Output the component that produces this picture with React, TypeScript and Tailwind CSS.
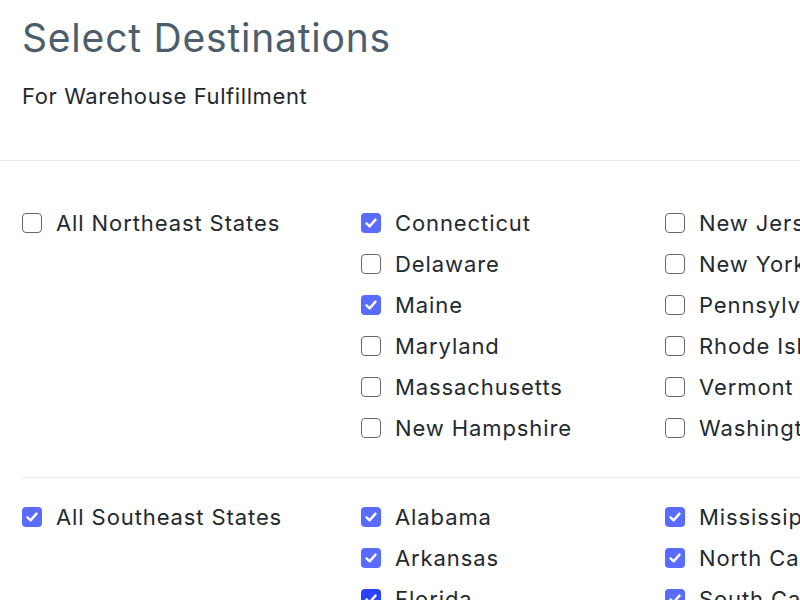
import React from "react";

type Item = { label: string; checked: boolean; focus?: boolean };

type Region = {
  name: string;
  all: boolean;
  columns: Item[][];
};

const regions: Region[] = [
  {
    name: "All Northeast States",
    all: false,
    columns: [
      [
        { label: "Connecticut", checked: true },
        { label: "Delaware", checked: false },
        { label: "Maine", checked: true },
        { label: "Maryland", checked: false },
        { label: "Massachusetts", checked: false },
        { label: "New Hampshire", checked: false },
      ],
      [
        { label: "New Jersey", checked: false },
        { label: "New York", checked: false },
        { label: "Pennsylvania", checked: false },
        { label: "Rhode Island", checked: false },
        { label: "Vermont", checked: false },
        { label: "Washington D.C.", checked: false },
      ],
    ],
  },
  {
    name: "All Southeast States",
    all: true,
    columns: [
      [
        { label: "Alabama", checked: true },
        { label: "Arkansas", checked: true },
        { label: "Florida", checked: true, focus: true },
        { label: "Georgia", checked: true },
        { label: "Kentucky", checked: true },
        { label: "Louisiana", checked: true },
      ],
      [
        { label: "Mississippi", checked: true },
        { label: "North Carolina", checked: true },
        { label: "South Carolina", checked: true },
        { label: "Tennessee", checked: true },
        { label: "Virginia", checked: true },
        { label: "West Virginia", checked: true },
      ],
    ],
  },
];

function Box({ checked, focus }: { checked: boolean; focus?: boolean }) {
  if (checked) {
    return (
      <span
        className={`flex h-[20px] w-[20px] shrink-0 items-center justify-center rounded-[4px] ${
          focus ? "bg-[#2b43ff]" : "bg-[#5a6bff]"
        }`}
      >
        <svg width="14" height="14" viewBox="0 0 14 14" fill="none">
          <path
            d="M2.5 7.4 L5.6 10.4 L11.5 3.6"
            stroke="white"
            strokeWidth="2.4"
            strokeLinecap="round"
            strokeLinejoin="round"
          />
        </svg>
      </span>
    );
  }
  return (
    <span className="h-[20px] w-[20px] shrink-0 rounded-[4px] border-[1.5px] border-[#66696b] bg-white" />
  );
}

function Row({ item }: { item: Item }) {
  return (
    <label className="flex h-[25px] items-center gap-[14px] whitespace-nowrap">
      <Box checked={item.checked} focus={item.focus} />
      <span className="text-[22px] leading-none tracking-[0.9px] text-[#1f2a30]">
        {item.label}
      </span>
    </label>
  );
}

export default function App() {
  return (
    <div
      className="h-[600px] w-[800px] overflow-hidden bg-white"
      style={{ fontFamily: "Inter, 'Noto Sans', sans-serif" }}
    >
      <header className="px-[22px] pt-[14px] pb-[50px]">
        <h1 className="text-[39px] leading-[48px] tracking-[0.8px] text-[#4d5d6b]">
          Select Destinations
        </h1>
        <p className="mt-[20px] text-[22px] leading-[28px] tracking-[0.6px] text-[#1f2a30]">
          For Warehouse Fulfillment
        </p>
      </header>
      <div className="h-px w-full bg-[#e8edf1]" />
      <div className="pl-[22px]">
        {regions.map((region, i) => (
          <section
            key={region.name}
            className={
              i === 0
                ? "w-[1000px] pt-[49px] pb-[37px] border-b border-[#e8edf1]"
                : "w-[1000px] pt-[26px] pb-[37px]"
            }
          >
            <div className="grid grid-cols-[339px_304px_304px]">
              <div>
                <Row item={{ label: region.name, checked: region.all }} />
              </div>
              {region.columns.map((col, j) => (
                <div key={j} className="flex flex-col gap-4">
                  {col.map((item) => (
                    <Row key={item.label} item={item} />
                  ))}
                </div>
              ))}
            </div>
          </section>
        ))}
      </div>
    </div>
  );
}
